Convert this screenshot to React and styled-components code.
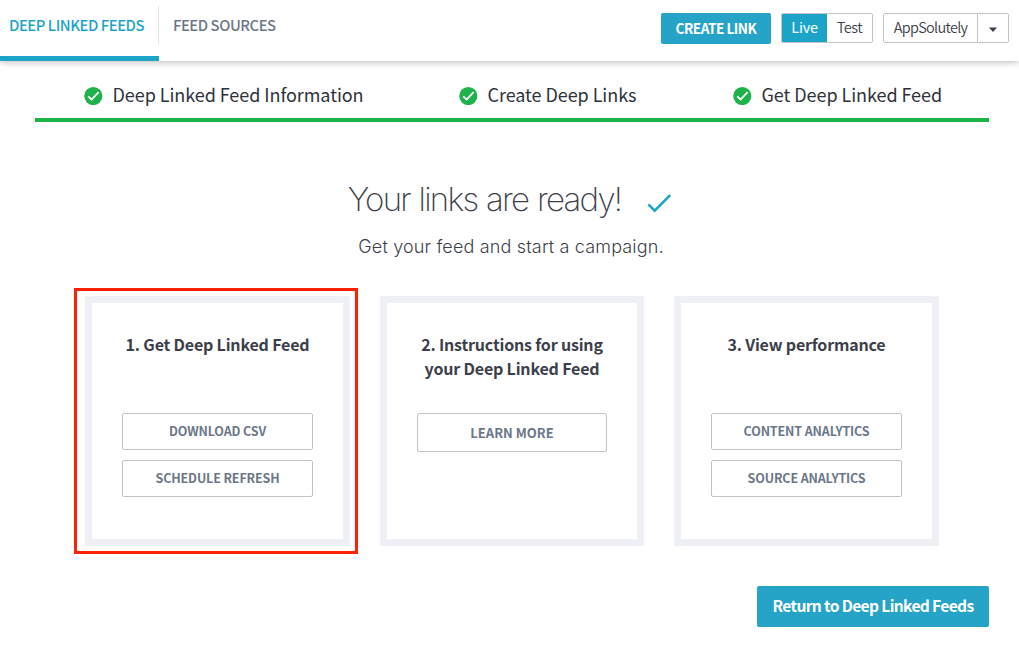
import React from "react";
import styled, { createGlobalStyle } from "styled-components";

const GlobalStyle = createGlobalStyle`
  * { box-sizing: border-box; }
  body { margin: 0; background: #fff; }
  body, button { font-family: "Noto Sans CJK SC", "Open Sans", sans-serif; }
  button { margin: 0; padding: 0; cursor: pointer; }
`;

const Page = styled.div`
  width: 1019px;
  height: 646px;
  overflow: hidden;
  background: #fff;
  color: #3c3f4b;
`;

const Header = styled.header`
  position: relative;
  display: flex;
  justify-content: space-between;
  height: 61px;
  padding-right: 10px;
  background: #fff;
  box-shadow: 0 1px 7px rgba(0, 0, 0, 0.28);
`;

const Tabs = styled.nav`
  display: flex;
`;

const Tab = styled.a`
  display: flex;
  align-items: center;
  height: 61px;
  padding: 0 14px ${(p) => (p.$active ? 7 : 12)}px ${(p) => (p.$active ? 9 : 14)}px;
  width: ${(p) => (p.$active ? "159px" : "auto")};
  border-bottom: ${(p) => (p.$active ? "5px solid #1ca4c8" : "none")};
  background: ${(p) =>
    p.$active
      ? "linear-gradient(#e4e4e6, #e4e4e6) right 6px / 1px 38px no-repeat"
      : "none"};
  font-size: 14.8px;
  font-weight: 500;
  letter-spacing: -0.44px;
  white-space: nowrap;
  color: ${(p) => (p.$active ? "#1ca4c8" : "#6b7789")};
`;

const Actions = styled.div`
  display: flex;
  align-items: flex-start;
  gap: 10px;
  padding-top: 13px;
`;

const PrimaryButton = styled.button`
  width: ${(p) => p.$w}px;
  height: ${(p) => p.$h}px;
  padding-bottom: ${(p) => p.$lift || 1}px;
  border: 0;
  border-radius: 2px;
  background: #26a4c7;
  color: #fff;
  font-size: ${(p) => p.$size}px;
  font-weight: ${(p) => p.$weight || 700};
  letter-spacing: ${(p) => p.$track || 0}px;
  white-space: nowrap;
`;

const Segmented = styled.div`
  display: flex;
  height: 30px;
  border: 1px solid #c3c3c6;
  border-radius: 2px;
  overflow: hidden;
`;

const Segment = styled.button`
  display: flex;
  align-items: center;
  justify-content: center;
  width: ${(p) => p.$w}px;
  height: 28px;
  padding-bottom: ${(p) => (p.$divided ? 0 : 3)}px;
  padding-top: ${(p) => (p.$divided ? 3 : 0)}px;
  border: 0;
  border-left: ${(p) => (p.$divided ? "1px solid #c3c3c6" : "none")};
  background: ${(p) => (p.$active ? "#1ca4c8" : "#fff")};
  color: ${(p) => (p.$active ? "#fff" : "#3c3f4b")};
  font-size: 14.5px;
  font-weight: ${(p) => (p.$active ? 400 : 350)};
  letter-spacing: ${(p) => p.$track || 0}px;
`;

const Steps = styled.div`
  display: flex;
  height: 61px;
  margin: 0 30px 0 35px;
  padding-left: 49px;
  border-bottom: 4px solid #1fb24b;
`;

const Step = styled.div`
  display: flex;
  align-items: center;
  gap: 9.5px;
  width: ${(p) => p.$w}px;
  height: 57px;
  padding-top: 12px;
  white-space: nowrap;
  color: #2e323b;
`;

const StepLabel = styled.span`
  padding-bottom: 3px;
  font-size: 18px;
  font-weight: 400;
  letter-spacing: -0.06px;
`;

const Hero = styled.section`
  display: flex;
  flex-direction: column;
  align-items: center;
  height: 174px;
  padding-top: 56px;
  font-family: Inter, "Liberation Sans", sans-serif;
`;

const Title = styled.h1`
  display: flex;
  align-items: center;
  gap: 26px;
  margin: 0;
  height: 42px;
  padding-left: 1px;
  font-size: 33px;
  font-weight: 200;
  letter-spacing: -1.72px;
  word-spacing: 1px;
  white-space: nowrap;

  svg {
    margin-top: 8px;
  }
`;

const Subtitle = styled.p`
  margin: 15px 0 0;
  padding-left: 3px;
  font-size: 18px;
  line-height: 24px;
  font-weight: 300;
  letter-spacing: 0.16px;
  white-space: nowrap;
`;

const Cards = styled.div`
  display: flex;
  gap: 30px;
  padding-left: 85px;
`;

const Card = styled.section`
  position: relative;
  display: flex;
  flex-direction: column;
  width: ${(p) => p.$w}px;
  height: 250px;
  padding: 29px 30px 0;
  border: 7px solid #eff0f6;
`;

const CardTitle = styled.h2`
  height: 81px;
  margin: 0;
  text-align: center;
  font-size: 16px;
  line-height: 24px;
  font-weight: 700;
  letter-spacing: -0.18px;
  white-space: nowrap;
`;

const ButtonStack = styled.div`
  display: flex;
  flex-direction: column;
  gap: 10px;
`;

const OutlineButton = styled.button`
  height: ${(p) => (p.$tall ? 39 : 37)}px;
  padding-bottom: ${(p) => (p.$tall ? 0 : 2)}px;
  border: 1px solid #c2c2c5;
  border-radius: 2px;
  background: #fff;
  color: #6b7789;
  font-size: ${(p) => (p.$tall ? 13 : 12.5)}px;
  font-weight: 700;
  letter-spacing: ${(p) => (p.$tall ? 0 : -0.14)}px;
`;

const Highlight = styled.div`
  position: absolute;
  inset: -15px -15px -15px -18px;
  border: 3px solid #ff2106;
  pointer-events: none;
`;

const Footer = styled.footer`
  display: flex;
  justify-content: flex-end;
  padding: 40px 30px 0 0;
`;

const CheckCircle = () => (
  <svg width="19" height="19" viewBox="0 0 19 19">
    <circle cx="9.3" cy="10" r="9.1" fill="#1fb24b" />
    <path d="M4.2 10.3l3.4 3.2 7-7.3" fill="none" stroke="#fff" strokeWidth="1.8" />
  </svg>
);

const Tick = () => (
  <svg width="25" height="20" viewBox="0 0 25 20">
    <path d="M1.4 11.4l6.3 6.2L23.2 2.2" fill="none" stroke="#1ca4c8" strokeWidth="2.6" />
  </svg>
);

const Caret = () => (
  <svg width="10" height="6" viewBox="0 0 10 6">
    <path d="M1 .5h8L5 5z" fill="#3c3f4b" />
  </svg>
);

const steps = [
  { label: "Deep Linked Feed Information", width: 375 },
  { label: "Create Deep Links", width: 274 },
  { label: "Get Deep Linked Feed", width: 220 },
];

export default function App() {
  return (
    <Page>
      <GlobalStyle />
      <Header>
        <Tabs>
          <Tab $active>DEEP LINKED FEEDS</Tab>
          <Tab>FEED SOURCES</Tab>
        </Tabs>
        <Actions>
          <PrimaryButton $w={110} $h={31} $size={13.7} $track={-0.52}>CREATE LINK</PrimaryButton>
          <Segmented>
            <Segment $w={45} $active $track={-0.25}>Live</Segment>
            <Segment $w={45} $track={-0.4}>Test</Segment>
          </Segmented>
          <Segmented>
            <Segment $w={93} $track={-0.7}>AppSolutely</Segment>
            <Segment $w={31} $divided><Caret /></Segment>
          </Segmented>
        </Actions>
      </Header>
      <Steps>
        {steps.map((s) => (
          <Step key={s.label} $w={s.width}>
            <CheckCircle />
            <StepLabel>{s.label}</StepLabel>
          </Step>
        ))}
      </Steps>
      <Hero>
        <Title>
          Your links are ready!
          <Tick />
        </Title>
        <Subtitle>Get your feed and start a campaign.</Subtitle>
      </Hero>
      <Cards>
        <Card $w={265}>
          <CardTitle>1. Get Deep Linked Feed</CardTitle>
          <ButtonStack>
            <OutlineButton>DOWNLOAD CSV</OutlineButton>
            <OutlineButton>SCHEDULE REFRESH</OutlineButton>
          </ButtonStack>
          <Highlight />
        </Card>
        <Card $w={264}>
          <CardTitle>
            2. Instructions for using
            <br />
            your Deep Linked Feed
          </CardTitle>
          <ButtonStack>
            <OutlineButton $tall>LEARN MORE</OutlineButton>
          </ButtonStack>
        </Card>
        <Card $w={265}>
          <CardTitle>3. View performance</CardTitle>
          <ButtonStack>
            <OutlineButton>CONTENT ANALYTICS</OutlineButton>
            <OutlineButton>SOURCE ANALYTICS</OutlineButton>
          </ButtonStack>
        </Card>
      </Cards>
      <Footer>
        <PrimaryButton $w={232} $h={41} $size={15.6} $weight={700} $track={-0.65} $lift={4}>
          Return to Deep Linked Feeds
        </PrimaryButton>
      </Footer>
    </Page>
  );
}
